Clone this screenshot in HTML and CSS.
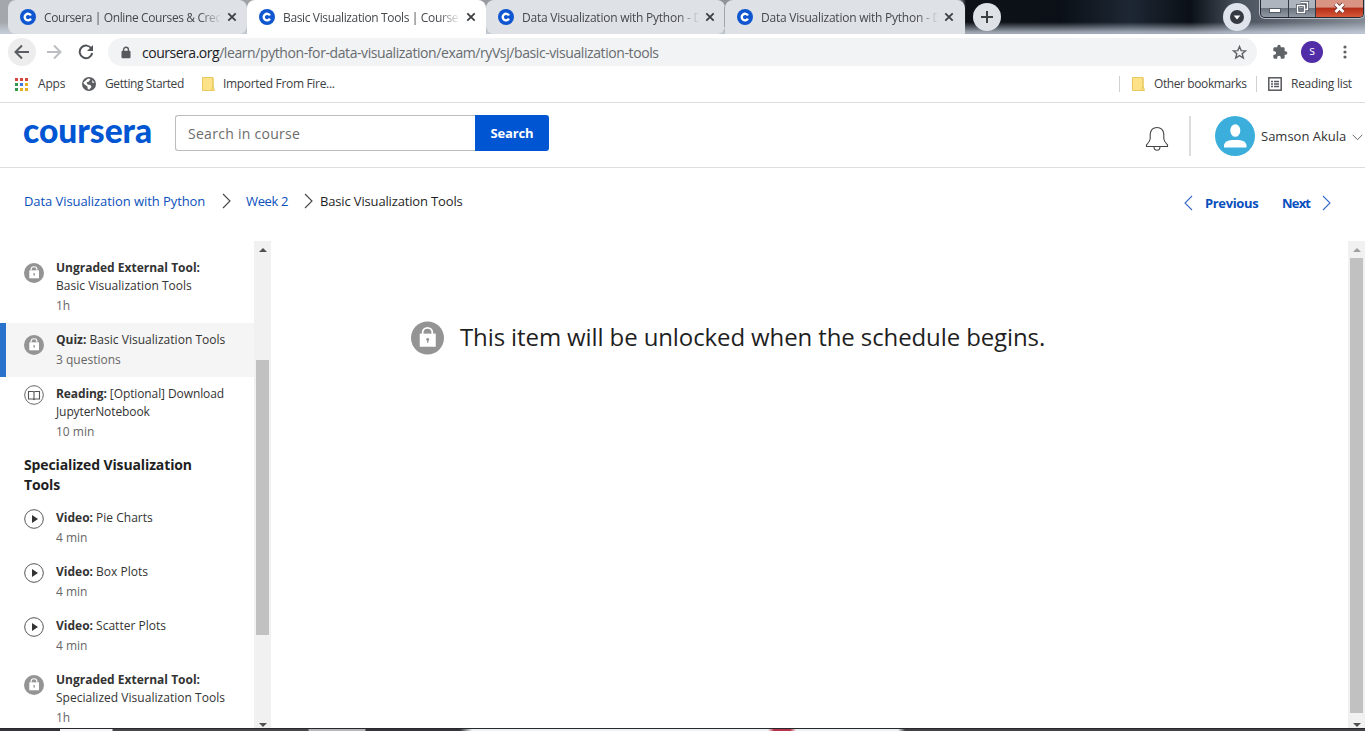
FILE: index.html
```
<!DOCTYPE html>
<html lang="en">
<head>
<meta charset="utf-8">
<title>Basic Visualization Tools | Coursera</title>
<link rel="stylesheet" href="styles.css">
</head>
<body>
<svg class="defs" width="0" height="0">
  <symbol id="fav" viewBox="0 0 16 16"><circle cx="8" cy="8" r="8" fill="#0f56d0"/><path d="M10.9 6.5A3.3 3.3 0 1 0 10.9 9.7" fill="none" stroke="#fff" stroke-width="2.4"/></symbol>
  <symbol id="close" viewBox="0 0 10 10"><path d="M1.3 1.3 8.7 8.7M8.7 1.3 1.3 8.7" stroke="#3c4043" stroke-width="1.8"/></symbol>
  <symbol id="lock" viewBox="0 0 34 34"><circle cx="17" cy="17" r="17" fill="#949494"/><path d="M12 13V11.5a5 5 0 0 1 10 0V13" fill="none" stroke="#fff" stroke-width="1.8"/><path d="M9 12.5H25.500V26H9z" fill="#fff"/><circle cx="17.200" cy="18.500" r="1.500" fill="#949494"/><path d="M16.500 19h1.400v3h-1.400z" fill="#949494"/></symbol>
  <symbol id="play" viewBox="0 0 20 20"><circle cx="10" cy="10" r="9.300" fill="#fff" stroke="#555" stroke-width="1"/><path d="M8 6v8l6-4z" fill="#333"/></symbol>
  <symbol id="book" viewBox="0 0 20 20"><circle cx="10" cy="10" r="9.300" fill="#fff" stroke="#666" stroke-width="1"/><path d="M4.500 6.500H9L10 7.300 11 6.500h4.500v7.500H11l-1 .6-1-.6H4.500zM10 7.300v7" fill="none" stroke="#555" stroke-width="1.100"/></symbol>
  <symbol id="chev" viewBox="0 0 9 16"><path d="M1 1 8 8 1 15" fill="none" stroke="currentColor" stroke-width="1.100"/></symbol>
  <symbol id="folder" viewBox="0 0 13 14"><path d="M.5 .5h10.500v8l1.500 5H.5z" fill="#fde28a" stroke="#e8c95c"/><path d="M11 .8v8L9.500 13.300" fill="none" stroke="#e8c95c"/></symbol>
</svg>

<div class="tabstrip">
  <div class="tab t1"><svg class="fav"><use href="#fav"/></svg><span class="title">Coursera | Online Courses &amp; Cred</span><svg class="x"><use href="#close"/></svg></div>
  <div class="tab active"><svg class="fav"><use href="#fav"/></svg><span class="title">Basic Visualization Tools | Courser</span><svg class="x"><use href="#close"/></svg></div>
  <div class="tab t3"><svg class="fav"><use href="#fav"/></svg><span class="title">Data Visualization with Python - D</span><svg class="x"><use href="#close"/></svg></div>
  <div class="tab t4"><svg class="fav"><use href="#fav"/></svg><span class="title">Data Visualization with Python - D</span><svg class="x"><use href="#close"/></svg></div>
  <div class="newtab"><svg width="14" height="14"><path d="M7 1v12M1 7h12" stroke="#3c4043" stroke-width="2"/></svg></div>
  <div class="tabsearch"><svg width="14" height="14"><circle cx="7" cy="7" r="7" fill="#353a42"/><path d="M3.700 5.500h6.600L7 9.500z" fill="#fff"/></svg></div>
  <div class="winctl">
    <div class="wc min"><svg width="12" height="5"><rect x=".5" y=".5" width="11" height="4" fill="#fff" stroke="#555b66"/></svg></div>
    <div class="wc max"><svg width="13" height="13"><path d="M4.500 1.500h7v7h-2M1.500 4.500h7v7h-7z" fill="none" stroke="#454c58" stroke-width="3"/><path d="M4.500 1.500h7v7h-2M1.500 4.500h7v7h-7z" fill="none" stroke="#fff" stroke-width="1.500"/></svg></div>
    <div class="wc cls"><svg width="13" height="12"><path d="M2.500 2 10.500 10M10.500 2 2.500 10" stroke="#6d3530" stroke-width="4.500"/><path d="M2.500 2 10.500 10M10.500 2 2.500 10" stroke="#fff" stroke-width="2.800"/></svg></div>
  </div>
</div>

<div class="toolbar">
  <div class="nav on"><svg width="16" height="16"><path d="M15 8H2M8 1.500 1.500 8 8 14.500" fill="none" stroke="#5a5d61" stroke-width="2"/></svg></div>
  <div class="nav"><svg width="16" height="16"><path d="M1 8h13M8 1.500 14.500 8 8 14.500" fill="none" stroke="#bcbec1" stroke-width="2"/></svg></div>
  <div class="nav"><svg width="16" height="16"><path d="M13.500 4.800A6.300 6.300 0 1 0 14.200 9" fill="none" stroke="#505357" stroke-width="2"/><path d="M15 1v6H9z" fill="#505357"/></svg></div>
  <div class="omni">
    <svg class="padlock" width="10" height="13"><path d="M2.600 6V3.600a2.400 2.400 0 0 1 4.800 0V6" fill="none" stroke="#55585c" stroke-width="1.400"/><rect x=".5" y="4.800" width="9" height="7.500" rx="1" fill="#55585c"/></svg>
    <span class="url"><b>coursera.org</b>/learn/python-for-data-visualization/exam/ryVsj/basic-visualization-tools</span>
    <svg class="star" width="15" height="15" viewBox="0 0 15 15"><path d="M7.500 1.500 9.200 5.600l4.300.3-3.300 2.800 1.100 4.300-3.800-2.400-3.800 2.400 1.100-4.300L1.500 5.900l4.300-.3z" fill="none" stroke="#5f6368" stroke-width="1.400"/></svg>
  </div>
  <svg class="puzzle" width="16" height="16" viewBox="0 0 24 24"><path d="M20.500 11H19V7c0-1.100-.9-2-2-2h-4V3.500a2.500 2.500 0 0 0-5 0V5H4c-1.100 0-2 .9-2 2v3.800h1.500a2.700 2.700 0 0 1 0 5.400H2V20c0 1.100.9 2 2 2h3.800v-1.500a2.700 2.700 0 0 1 5.400 0V22H17c1.100 0 2-.9 2-2v-4h1.500a2.500 2.500 0 0 0 0-5z" fill="#5f6368"/></svg>
  <div class="me">s</div>
  <svg class="dots" width="4" height="14"><circle cx="2" cy="2" r="1.600" fill="#5f6368"/><circle cx="2" cy="7" r="1.600" fill="#5f6368"/><circle cx="2" cy="12" r="1.600" fill="#5f6368"/></svg>
</div>

<div class="bookmarks">
  <svg class="apps" width="14" height="14"><path d="M1 1h3v3H1zM6 1h3v3H6z" fill="#d7473b"/><path d="M11 1h3v3h-3z" fill="#d7473b"/><path d="M1 6h3v3H1z" fill="#31984e"/><path d="M6 6h3v3H6z" fill="#3d79dc"/><path d="M11 6h3v3h-3z" fill="#e8b020"/><path d="M1 11h3v3H1z" fill="#31984e"/><path d="M6 11h3v3H6zM11 11h3v3h-3z" fill="#e8b020"/></svg>
  <span class="bk b1">Apps</span>
  <svg class="globe" width="14" height="14"><circle cx="7" cy="7" r="7" fill="#5a5d61"/><path d="M6 1.400 8.500 2 7 4.500 4.500 5.500 5.500 7.500l3 .5L9.500 10 7 12.800 5.500 11.500v-2L2 7 1.300 5.500zM10 3l2.500 2.500-2 .5z" fill="#fff"/></svg>
  <span class="bk b2">Getting Started</span>
  <svg class="folder"><use href="#folder"/></svg>
  <span class="bk b3">Imported From Fire...</span>
  <i class="sep s1"></i>
  <svg class="folder f2"><use href="#folder"/></svg>
  <span class="bk b4">Other bookmarks</span>
  <i class="sep s2"></i>
  <svg class="rl" width="14" height="14"><rect x=".8" y=".8" width="12.400" height="12.400" fill="#fff" stroke="#55585c" stroke-width="1.500"/><path d="M3 4.500h2M6 4.500h5M3 7h2M6 7h5M3 9.500h2M6 9.500h5" stroke="#55585c" stroke-width="1.300"/></svg>
  <span class="bk b5">Reading list</span>
</div>

<header class="head">
  <div class="logo"><span>coursera</span></div>
  <div class="search"><div class="field"><span>Search in course</span></div><div class="btn"><span>Search</span></div></div>
  <div class="user">
    <svg class="bell" width="24" height="26" viewBox="0 0 24 26"><path d="M1.500 20.500v-1.700Q4.500 16 5.200 13V8Q6 1.500 12 1.500T18.800 8v5q.7 3 3.700 5.800v1.700z" fill="none" stroke="#444" stroke-width="1.100"/><path d="M9 20.500q0 3.800 3 3.800t3-3.800" fill="none" stroke="#444" stroke-width="1.100"/></svg>
    <i class="vline"></i>
    <svg class="avatar" width="40" height="40"><circle cx="20" cy="20" r="20" fill="#3caedb"/><ellipse cx="20.300" cy="14.500" rx="5" ry="6.300" fill="#fff"/><path d="M9 31.500V29q1-4.500 8-5h6.500q7 .5 8 5v2.500z" fill="#fff"/></svg>
    <span class="uname">Samson Akula</span>
    <svg class="down" width="11" height="7"><path d="M.7.8 5.500 5.700 10.300.8" fill="none" stroke="#666"/></svg>
  </div>
</header>

<nav class="crumbs">
  <a class="c1">Data Visualization with Python</a><svg class="chev k1"><use href="#chev"/></svg>
  <a class="c2">Week 2</a><svg class="chev k2"><use href="#chev"/></svg>
  <span class="c3">Basic Visualization Tools</span>
  <div class="pager"><svg class="chev prev"><use href="#chev"/></svg><b class="p1">Previous</b><b class="p2">Next</b><svg class="chev"><use href="#chev"/></svg></div>
</nav>

<div class="main">
  <aside class="side">
    <div class="item"><svg class="ic lo"><use href="#lock"/></svg><div><p><b class="w1">Ungraded External Tool:</b></p><p class="w2">Basic Visualization Tools</p><p class="meta">1h</p></div></div>
    <div class="item cur"><svg class="ic lo"><use href="#lock"/></svg><div><p><b>Quiz:</b> <span class="w2">Basic Visualization Tools</span></p><p class="meta">3 questions</p></div></div>
    <div class="item"><svg class="ic"><use href="#book"/></svg><div><p class="w3"><b>Reading:</b> [Optional] Download</p><p class="w3">JupyterNotebook</p><p class="meta">10 min</p></div></div>
    <h3>Specialized Visualization<br>Tools</h3>
    <div class="item"><svg class="ic"><use href="#play"/></svg><div><p><b>Video:</b> Pie Charts</p><p class="meta">4 min</p></div></div>
    <div class="item"><svg class="ic"><use href="#play"/></svg><div><p><b>Video:</b> Box Plots</p><p class="meta">4 min</p></div></div>
    <div class="item"><svg class="ic"><use href="#play"/></svg><div><p><b>Video:</b> Scatter Plots</p><p class="meta">4 min</p></div></div>
    <div class="item"><svg class="ic lo"><use href="#lock"/></svg><div><p><b class="w1">Ungraded External Tool:</b></p><p class="w2">Specialized Visualization Tools</p><p class="meta">1h</p></div></div>
  </aside>
  <div class="sb sb1"><i class="up"></i><div class="thumb"></div><i class="dn"></i></div>
  <section class="content">
    <svg class="biglock"><use href="#lock"/></svg><span class="msg">This item will be unlocked when the schedule begins.</span>
  </section>
  <div class="sb sb2"><i class="up"></i><div class="thumb"></div><i class="dn"></i></div>
</div>
<div class="taskbar"></div>
</body>
</html>
```
FILE: styles.css
```
* { box-sizing: border-box; }
body { margin: 0; width: 1365px; height: 731px; overflow: hidden; display: flex; flex-direction: column; background: #fff; font-family: "Open Sans", "Noto Sans", sans-serif; color: #1f1f1f; }
svg { display: block; flex: none; }
.defs { position: absolute; }
span, a, b { white-space: nowrap; }
p { margin: 0; }

/* browser chrome */
.tabstrip { height: 34px; flex: none; display: flex; padding-left: 8px; background: linear-gradient(rgba(255,255,255,0) 65%, rgba(205,215,228,.75) 95%), linear-gradient(90deg, #a4a8ac 0, #898d91 960px, #0e1218 966px, #0b1017 1060px, #1d2733 1130px, #0b1017 1190px, #4b535e 1240px, #858c96 1365px); }
.tab { height: 34px; width: 239px; flex: none; display: flex; align-items: center; background: #dee1e6; border-radius: 8px 8px 0 0; padding-left: 12px; font-size: 12px; color: #45484c; }
.tab.active { background: #fff; }
.tab.t1, .tab.t3 { border-radius: 8px; }
.tab.t3 { background: linear-gradient(#a0a3a8, #a0a3a8) right center / 1px 20px no-repeat #dee1e6; }
.tab.t4 { width: 240px; }
.fav { width: 16px; height: 16px; }
.title { width: 176px; margin-left: 8px; mask-image: linear-gradient(90deg, #000 155px, transparent 178px); letter-spacing: -.24px; }
.active .title { letter-spacing: -.36px; }
.t1 .title { letter-spacing: -.38px; }
.x { width: 10px; height: 10px; margin-left: 7px; }
.newtab { width: 28px; height: 28px; margin: 3px 0 0 8px; border-radius: 50%; background: #dee1e6; display: flex; align-items: center; justify-content: center; }
.tabsearch { width: 28px; height: 28px; margin: 3px 0 0 222px; border-radius: 50%; background: #dfe3ec; display: flex; align-items: center; justify-content: center; }
.winctl { display: flex; height: 18px; margin-left: 9px; border: 1px solid #242a33; border-top: 0; border-radius: 0 0 5px 5px; overflow: hidden; box-shadow: 0 0 0 1px #b9bec6; }
.wc { display: flex; align-items: center; justify-content: center; background: linear-gradient(#aeb4bd 45%, #6c7480 50%, #929aa6); border-right: 1px solid #333a44; }
.min { width: 28px; padding-top: 3px; } .max { width: 27px; padding-bottom: 2px; } .cls { width: 47px; padding-bottom: 2px; border: 0; background: linear-gradient(#da9484 40%, #b52f19 50%, #d7593a); }

.toolbar { height: 36px; flex: none; display: flex; align-items: center; padding-left: 8px; }
.nav { width: 28px; height: 28px; margin-right: 4px; border-radius: 50%; display: flex; align-items: center; justify-content: center; }
.nav.on { background: #ededee; }
.omni { width: 1149px; height: 28px; margin-left: 4px; border-radius: 14px; background: #f1f3f4; display: flex; align-items: center; padding: 0 10px 0 13px; }
.url { flex: 1; margin-left: 11px; font-size: 14px; color: #686c70; letter-spacing: -.41px; }
.url b { font-weight: 400; color: #202124; letter-spacing: -.48px; }
.puzzle { margin-left: 15px; }
.me { width: 22px; height: 22px; margin-left: 13px; border-radius: 50%; background: #512da8; color: #fff; font-size: 12px; line-height: 20px; text-align: center; }
.dots { margin-left: 20px; }

.bookmarks { height: 33px; flex: none; display: flex; align-items: center; border-bottom: 1px solid #dadce0; padding: 0 0 4px 14px; font-size: 12px; color: #3c4043; }
.bk { position: relative; top: -.5px; }
.b1 { margin-left: 10px; width: 44px; letter-spacing: -.2px; }
.b2 { margin-left: 9px; width: 97px; letter-spacing: -.4px; }
.folder { width: 13px; height: 14px; }
.b3 { margin-left: 8px; letter-spacing: -.32px; }
.s1 { margin-left: auto; }
.sep { width: 1px; height: 16px; background: #cfd1d4; }
.f2 { margin-left: 12px; }
.b4 { margin-left: 9px; width: 102px; letter-spacing: -.4px; }
.rl { margin-left: 11px; }
.b5 { margin-left: 9px; width: 74px; letter-spacing: -.28px; }

/* site header */
.head { height: 65px; flex: none; display: flex; border-bottom: 1px solid #ddd; padding-left: 24px; }
.logo { width: 151px; height: 58px; font-family: Lato, sans-serif; font-weight: 900; font-size: 33.5px; line-height: 54px; color: #0056d2; }
.logo span { margin-left: -1px; }
.search { display: flex; height: 36px; margin-top: 12px; font-size: 14px; line-height: 34px; }
.field { width: 300px; border: 1px solid #bdbdbd; border-right: 0; border-radius: 3px 0 0 3px; padding-left: 12px; color: #6c6c6c; letter-spacing: .28px; line-height: 35px; }
.btn { width: 74px; background: #0056d2; color: #fff; font-weight: 700; font-size: 13px; letter-spacing: -.15px; line-height: 36px; text-align: center; border-radius: 0 3px 3px 0; }
.user { display: flex; margin-left: auto; padding-right: 2px; }
.bell { margin-top: 23px; }
.vline { width: 2px; height: 40px; margin: 13px 0 0 20px; background: #ddd; }
.avatar { margin: 13px 0 0 24px; }
.uname { margin-left: 6px; width: 86px; font-size: 13px; line-height: 66px; color: #333; }
.down { margin: 31px 0 0 5px; }

.crumbs { height: 73px; flex: none; display: flex; align-items: flex-start; padding: 23px 0 0 24px; font-size: 13px; line-height: 20px; }
.crumbs a, .pager { color: #0a50bd; }
.c1 { width: 182px; letter-spacing: -.07px; } .c2 { width: 43px; letter-spacing: -.35px; }
.c3 { letter-spacing: -.15px; }
.chev { width: 9px; height: 16px; margin-top: 2px; color: #444; }
.k1 { margin-left: 16px; margin-right: 15px; } .k2 { margin-left: 15px; margin-right: 7px; }
.pager { display: flex; margin: 2px 34px 0 auto; }
.pager .chev { color: #3668cc; margin-top: 2px; }
.prev { transform: scaleX(-1); }
.p1 { margin-left: 12px; width: 54px; letter-spacing: -.36px; }
.p2 { margin-left: 23px; width: 28px; margin-right: 12px; letter-spacing: -.8px; }

/* course area */
.main { height: 487px; flex: none; display: flex; }
.side { width: 254px; overflow: hidden; padding-top: 10px; }
.item { display: flex; padding: 8px 0 8px 24px; font-size: 12px; line-height: 18px; color: #333; }
.item > div { margin-left: 12px; }
.item p { white-space: nowrap; }
.w2 { letter-spacing: .03px; }
.w3 { letter-spacing: -.1px; }
.item.cur { background: #f5f5f5; border-left: 6px solid #2a73cc; padding-left: 18px; }
.item .meta { margin-top: 2px; color: #666; }
.ic { width: 20px; height: 20px; }
.ic.lo { margin-top: 4px; }
h3 { margin: 0; padding: 6px 0 6px 24px; font-size: 14px; line-height: 20px; letter-spacing: -.12px; }
.sb { width: 17px; background: #f1f1f1; display: flex; flex-direction: column; align-items: center; }
.sb .thumb { width: 13px; background: #c1c1c1; }
.up { margin-top: 7px; border: 4px solid transparent; border-top: 0; border-bottom: 4px solid #505050; }
.dn { margin: auto 0 1px; border: 4px solid transparent; border-bottom: 0; border-top: 4px solid #505050; }
.sb1 .thumb { margin-top: 108px; height: 275px; }
.sb2 .thumb { margin-top: 6px; height: 455px; }
.sb2 .up { border-bottom-color: #a0a0a0; }
.content { flex: 1; display: flex; padding: 80px 0 0 140px; }
.biglock { width: 33px; height: 34px; margin-top: 0; }
.msg { margin-left: 16px; font-size: 24px; line-height: 32px; letter-spacing: -.11px; }
.taskbar { height: 3px; flex: none; border-top: 1px solid #24272c; background: linear-gradient(90deg, #35343b 0 60px, #f4f4f4 60px 112px, #46464b 113px 308px, #b6b6b6 309px 365px, #34343a 366px 460px, #eef2f4 472px 768px, #b8324a 774px 790px, #eef0f2 796px 898px, #424246 905px); }
```
